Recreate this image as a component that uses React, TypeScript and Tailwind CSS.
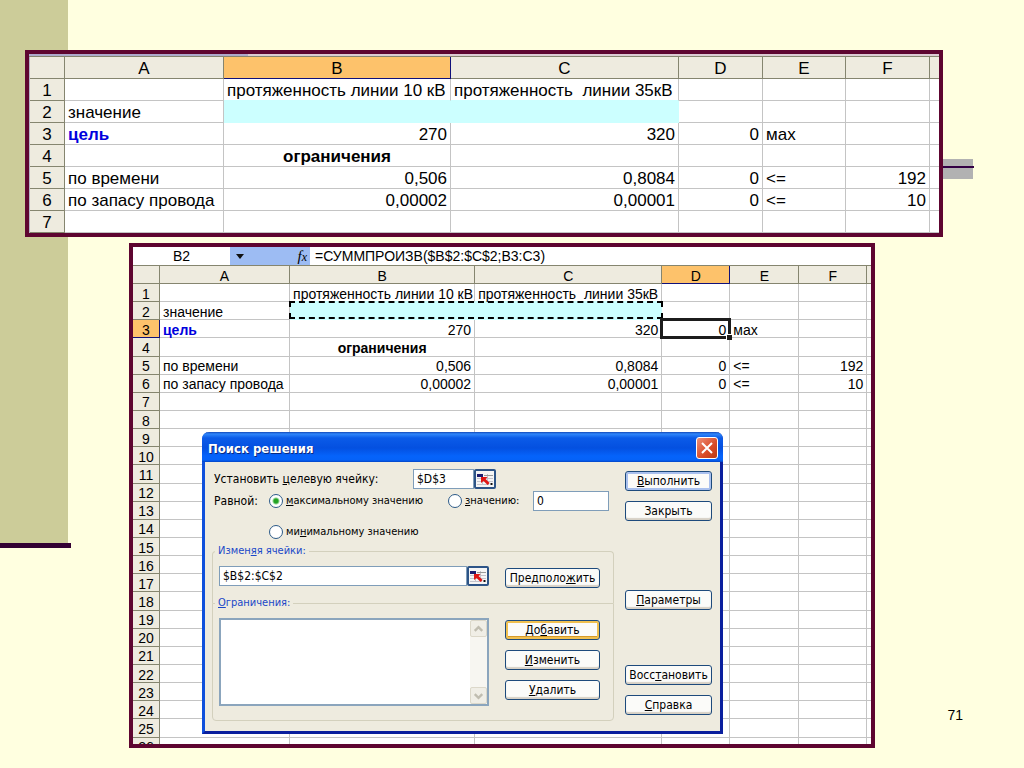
import React from "react";

type Row = [string, string, string, string, string, string];

const data: Row[] = [
  ["", "протяженность линии 10 кВ", "протяженность\u00a0 линии 35кВ", "", "", ""],
  ["значение", "", "", "", "", ""],
  ["цель", "270", "320", "0", "мах", ""],
  ["", "ограничения", "", "", "", ""],
  ["по времени", "0,506", "0,8084", "0", "<=", "192"],
  ["по запасу провода", "0,00002", "0,00001", "0", "<=", "10"],
];

const empty: Row = ["", "", "", "", "", ""];
const letters = ["A", "B", "C", "D", "E", "F"];

function cellClass(r: number, c: number): string {
  const parts = ["relative whitespace-nowrap border-r border-b p-0 pt-[2px] leading-none"];
  const cyan = r === 1 && (c === 1 || c === 2);
  if (cyan) parts.push("bg-[#ccffff] border-[#ccffff]");
  else if (r === 0 && (c === 1 || c === 2)) parts.push("border-r-[#c4c4c4] border-b-[#ccffff]");
  else parts.push("border-[#c4c4c4]");
  if (r === 3 && c === 1) parts.push("text-center font-bold");
  else if (r > 1 && c !== 0 && c !== 4) parts.push("text-right pr-[3px]");
  else parts.push("text-left pl-[3px]");
  if (r === 2 && c === 0) parts.push("font-bold text-[#0000dd]");
  return parts.join(" ");
}

const head = "border-r border-b p-0 pt-[2px] text-center font-normal leading-none";
const plain = "border-[#85856f] bg-[#eeebdf]";
const lit = "border-[#10107a] bg-[#fdc26b]";

function Sheet(props: {
  rows: number;
  widths: string[];
  className: string;
  rowClass: string;
  activeCol: number;
  activeRow?: number;
  marks?: boolean;
}) {
  const { rows, widths, className, rowClass, activeCol, activeRow, marks } = props;
  return (
    <table className={"w-full table-fixed border-separate border-spacing-0 bg-white " + className}>
      <colgroup>
        {widths.map((w, i) => (
          <col key={i} className={w} />
        ))}
      </colgroup>
      <thead>
        <tr className={rowClass}>
          <th className={head + " " + plain} />
          {letters.map((l, i) => (
            <th key={l} scope="col" className={head + " " + (i === activeCol ? lit : plain)}>
              {l}
            </th>
          ))}
          <th className={"border-b p-0 " + plain} />
        </tr>
      </thead>
      <tbody>
        {Array.from({ length: rows }, (_, r) => (
          <tr key={r} className={rowClass}>
            <th scope="row" className={head + " " + (r === activeRow ? lit : plain)}>
              {r + 1}
            </th>
            {(data[r] ?? empty).map((text, c) => (
              <td key={c} className={cellClass(r, c)}>
                {text}
                {marks && r === 1 && c === 1 && (
                  <span className="absolute -top-px bottom-0 -left-px z-10 w-[203%] border-2 border-dashed border-black" />
                )}
                {marks && r === 2 && c === 3 && (
                  <span className="absolute -inset-x-[2px] -top-[2px] -bottom-[2px] z-10 border-[3px] border-[#1c1c1c]">
                    <span className="absolute -right-[4px] -bottom-[4px] size-[6px] border-t border-l border-white bg-[#1c1c1c]" />
                  </span>
                )}
              </td>
            ))}
            <td className="border-b border-[#c4c4c4] p-0" />
          </tr>
        ))}
      </tbody>
    </table>
  );
}

function PushButton(props: { children: React.ReactNode; tone?: "default" | "hot"; className?: string }) {
  const inner =
    props.tone === "hot"
      ? "shadow-[inset_0_0_0_2px_#f0c050,inset_0_-3px_0_#d79a28]"
      : props.tone === "default"
        ? "shadow-[inset_0_0_0_2px_#a9c0ee]"
        : "shadow-[inset_0_-2px_1px_#d6d0c5]";
  return (
    <button
      type="button"
      className={
        "flex h-[20px] w-full shrink-0 items-center justify-center rounded-[3px] border border-[#1d4a7c] bg-[#fbfbf9] whitespace-nowrap text-black " +
        inner +
        " " +
        (props.className ?? "")
      }
    >
      <span>{props.children}</span>
    </button>
  );
}

function RefButton({ label }: { label: string }) {
  return (
    <button
      type="button"
      aria-label={label}
      className="flex h-full w-[22px] shrink-0 items-center justify-center rounded-[2px] border-2 border-[#2d5487] bg-[#f5f5f5]"
    >
      <svg width="16" height="13" viewBox="0 0 16 13">
        <path d="M0 5.5H16M0 8.5H16M0 11.500H12M5.5 1V12M10.5 1V12" stroke="#c3c3cc" />
        <path d="M0 1h6v3H0z" fill="#1d1d70" />
        <path d="M7 2.500h9" stroke="#999" />
        <path d="M4 4h6.500l-1.900 1.900 4 4-2 2-4-4L4 10z" fill="#e01515" />
        <path d="M13.500 10h2v2h-2z" fill="#111" />
      </svg>
    </button>
  );
}

function Radio({ children, checked }: { children: React.ReactNode; checked?: boolean }) {
  return (
    <label className="flex items-center gap-[3px] text-[11px] whitespace-nowrap">
      <input
        type="radio"
        name="target"
        defaultChecked={checked}
        className="size-[14px] shrink-0 appearance-none rounded-full border border-[#2c5a88] bg-white checked:bg-[radial-gradient(circle,#24a324_0_2px,#8fd48f_3px,#fff_4px)]"
      />
      <span>{children}</span>
    </label>
  );
}

const field = "min-w-0 border border-[#7f9db9] bg-white text-black outline-none";
const legend = "-ml-1 h-[12px] bg-[#eeebdf] px-[3px] text-[11px] leading-[12px] text-[#1a48c8]";

function SolverDialog() {
  return (
    <section
      role="dialog"
      aria-label="Поиск решения"
      className="absolute top-[185px] left-[69px] z-20 w-[521px] rounded-t-[7px] border-x-[3px] border-b-[3px] border-l-[#0f50dc] border-r-[#0a1f9e] border-b-[#0a1f9e] bg-[#eeebdf] font-['DejaVu_Sans_Condensed','DejaVu_Sans',sans-serif] text-[12px] leading-[14px] text-black"
    >
      <header className="-mx-[3px] flex h-[30px] items-center justify-between rounded-t-[7px] bg-[linear-gradient(#1248b8_0,#2f86fa_2px,#0b5be8_6px,#0450e0_16px,#0563fb_24px,#0562f8_28px,#0344c4_30px)] pr-[5px] pl-[6px]">
        <h2 className="pt-1 text-[13px] font-bold text-white [text-shadow:1px_1px_#0a2a80]">Поиск решения</h2>
        <button
          type="button"
          aria-label="Закрыть окно"
          className="mt-[2px] flex size-[22px] items-center justify-center rounded-[3px] border border-white bg-[linear-gradient(135deg,#ee9078,#d94a26_60%,#b93a16)]"
        >
          <svg width="12" height="12" viewBox="0 0 12 12">
            <path d="M1 1l10 10M11 1L1 11" stroke="#fff" strokeWidth="2" />
          </svg>
        </button>
      </header>

      <div className="flex gap-[11px] pt-[7px] pr-2 pb-[10px] pl-[7px]">
        <div className="flex min-w-0 flex-1 flex-col">
          <div className="flex h-[20px] items-center pl-[2px]">
            <label htmlFor="goal" className="w-[199px] whitespace-nowrap">
              Установить <u>ц</u>елевую ячейку:
            </label>
            <input id="goal" defaultValue="$D$3" className={field + " h-full w-[61px] px-[3px]"} />
            <RefButton label="Выбрать целевую ячейку" />
          </div>
          <div className="mt-[2px] grid h-[20px] grid-cols-[55px_179px_85px_76px] items-center pl-[2px]">
            <span>Равной:</span>
            <Radio checked>
              <u>м</u>аксимальному значению
            </Radio>
            <Radio>
              <u>з</u>начению:
            </Radio>
            <input aria-label="значение" defaultValue="0" className={field + " h-full px-[3px]"} />
          </div>
          <div className="mt-[11px] flex h-[20px] items-center pl-[57px]">
            <Radio>
              ми<u>н</u>имальному значению
            </Radio>
          </div>

          <fieldset className="mt-[3px] rounded-t-[4px] border border-b-0 border-[#d3d0bd] px-[6px] pt-[9px] pb-[15px]">
            <legend className={legend}>
              Измен<u>я</u>я ячейки:
            </legend>
            <div className="flex h-[22px] gap-4">
              <div className="flex h-[20px] w-[270px]">
                <input
                  aria-label="Изменяя ячейки"
                  defaultValue="$B$2:$C$2"
                  className={field + " h-full flex-1 px-[3px]"}
                />
                <RefButton label="Выбрать изменяемые ячейки" />
              </div>
              <div className="w-[95px] self-end">
                <PushButton>
                  Предполо<u>ж</u>ить
                </PushButton>
              </div>
            </div>
          </fieldset>

          <fieldset className="-mt-[6px] rounded-b-[4px] border border-[#d3d0bd] px-[6px] pt-[9px] pb-[14px]">
            <legend className={legend}>
              <u>О</u>граничения:
            </legend>
            <div className="flex gap-4">
              <div className="flex h-[88px] w-[270px] justify-end border-2 border-[#8ba5bd] bg-white">
                <div className="flex w-[17px] flex-col justify-between bg-[#f7f6f1]">
                  {["M4 9l4-4 4 4", "M4 5l4 4 4-4"].map((d) => (
                    <span
                      key={d}
                      className="flex h-[17px] items-center justify-center rounded-[2px] border border-[#dcd8ca] bg-[#f0eee6]"
                    >
                      <svg width="15" height="14" viewBox="0 0 16 14">
                        <path d={d} fill="none" stroke="#c0bdb0" strokeWidth="2.500" />
                      </svg>
                    </span>
                  ))}
                </div>
              </div>
              <div className="flex w-[95px] flex-col gap-[10px] pt-[2px]">
                <PushButton tone="hot">
                  До<u>б</u>авить
                </PushButton>
                <PushButton>
                  <u>И</u>зменить
                </PushButton>
                <PushButton>
                  <u>У</u>далить
                </PushButton>
              </div>
            </div>
          </fieldset>
        </div>

        <div className="flex w-[87px] flex-col gap-[10px] pt-[2px]">
          <PushButton tone="default">
            <u>В</u>ыполнить
          </PushButton>
          <PushButton>Закрыть</PushButton>
          <PushButton className="mt-[59px]">
            <u>П</u>араметры
          </PushButton>
          <PushButton className="mt-[45px]">
            Восс<u>т</u>ановить
          </PushButton>
          <PushButton>
            <u>С</u>правка
          </PushButton>
        </div>
      </div>
    </section>
  );
}

export default function App() {
  return (
    <main className="relative min-h-screen overflow-hidden bg-[#ffffe0] pt-[50px] font-['Liberation_Sans',Arial,sans-serif] text-black">
      <div className="absolute top-0 left-0 h-[543px] w-[68px] bg-[#cccc99]" />
      <div className="absolute top-[543px] left-0 h-[5px] w-[71px] bg-[#330033]" />
      <div className="absolute top-[159px] right-[51px] flex h-[20px] w-[60px] items-center bg-[#b2b2b2]">
        <div className="-mr-px mb-1 h-[2px] flex-1 bg-[#330044]" />
      </div>

      <div className="relative mr-[81px] ml-[25px] border-4 border-[#5e0530] bg-[#b5b2c4]">
        <div className="h-[3px] border-b border-[#85856f] bg-[linear-gradient(to_right,#aeaacb_219px,#dccbd2_219px)]" />
        <div className="pl-px">
          <Sheet
            rows={7}
            activeCol={1}
            widths={["w-[35px]", "w-[159px]", "w-[227px]", "w-[228px]", "w-[84px]", "w-[83px]", "w-[84px]", "w-[9px]"]}
            className="text-[17px]"
            rowClass="h-[22px]"
          />
        </div>
      </div>

      <div className="relative mt-[6px] mr-[61px] mb-5 ml-[129px] flex items-end justify-between">
        <div className="relative mr-[72px] h-[505px] min-w-0 flex-1 overflow-hidden border-4 border-[#5e0530] bg-white">
          <div className="flex h-[19px] border-b border-[#85856f] text-[14px]">
            <input
              aria-label="Имя ячейки"
              defaultValue="B2"
              className="w-[97px] bg-white text-center outline-none"
            />
            <div className="flex w-[80px] items-center justify-between bg-[#9dbcf3] pr-[3px] pl-[6px]">
              <button type="button" aria-label="Список имён">
                <svg width="8" height="5" viewBox="0 0 8 5">
                  <path d="M0 0h8L4 5z" fill="#111" />
                </svg>
              </button>
              <button
                type="button"
                className="font-['Liberation_Serif',serif] text-[15px] leading-none italic"
              >
                f<span className="text-[12px]">x</span>
              </button>
            </div>
            <input
              aria-label="Формула"
              defaultValue="=СУММПРОИЗВ($B$2:$C$2;B3:C3)"
              className="min-w-0 flex-1 bg-white pl-[5px] outline-none"
            />
          </div>
          <Sheet
            rows={26}
            activeCol={3}
            activeRow={2}
            marks
            widths={["w-[27px]", "w-[130px]", "w-[185px]", "w-[187px]", "w-[68px]", "w-[69px]", "w-[68px]", "w-[4px]"]}
            className="h-[490px] text-[14px]"
            rowClass="h-[18px]"
          />
          <SolverDialog />
        </div>
        <p className="mb-[25px] text-[14px] leading-4">71</p>
      </div>
    </main>
  );
}
